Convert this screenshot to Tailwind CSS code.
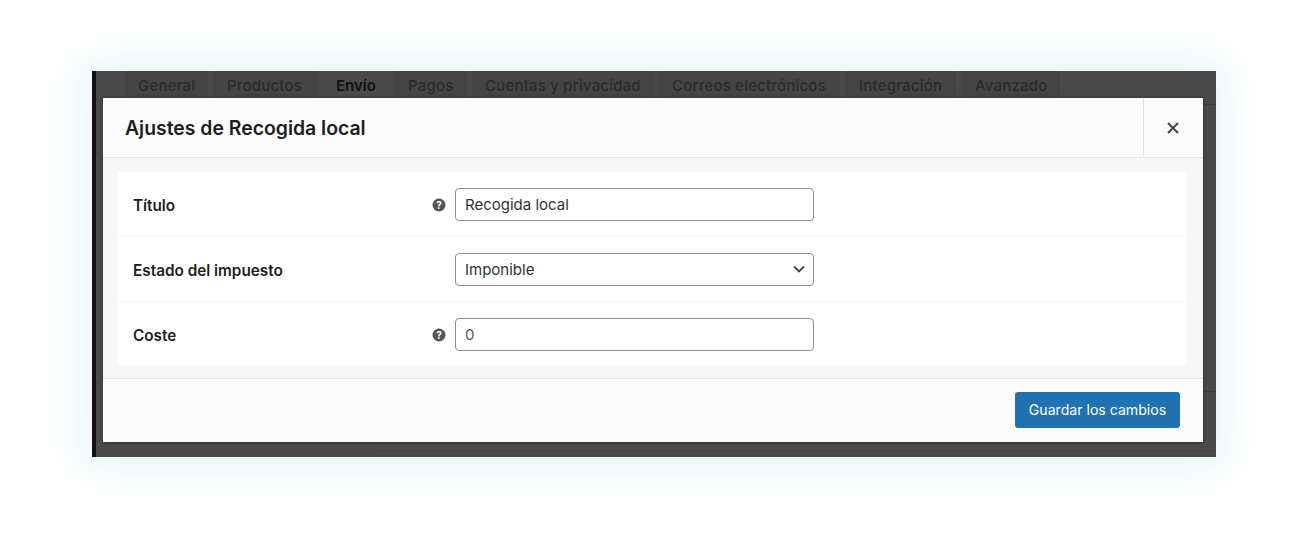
<!DOCTYPE html>
<html lang="es">
<head>
    <meta charset="UTF-8">
    <title>Ajustes de Recogida local</title>
    <script src="https://cdn.jsdelivr.net/npm/@tailwindcss/browser@4"></script>
</head>
<body class="bg-white h-[542px] overflow-hidden font-['Inter',sans-serif]">
    <div class="pt-[71px] pl-[92px]">
        <!-- fondo oscuro de WooCommerce -->
        <div class="relative w-[1124px] h-[386px] bg-[#4a4a4a] border-l-4 border-[#111] shadow-[0_0_36px_10px_#e6f5f9]">
            <!-- lineas de la pagina que quedan detras del modal -->
            <div class="absolute left-[1107px] right-0 top-[33px] h-px bg-[#3f3f3f]"></div>
            <div class="absolute left-[1107px] right-0 top-[320px] h-px bg-[#3f3f3f]"></div>
            <div class="absolute left-[280px] right-0 bottom-[6px] h-px bg-[#444]"></div>

            <div class="flex h-[27px] pl-[29px] gap-[6px] text-[15px] tracking-[0.2px] font-medium text-[#2b2b2b] leading-[29px]">
                <div class="w-[83px] bg-[#444] pl-[13px]">General</div>
                <div class="w-[103px] bg-[#444] pl-[13px]">Productos</div>
                <div class="w-[66px] bg-[#4a4a4a] pl-[13px] font-semibold tracking-normal text-[#111]">Envío</div>
                <div class="w-[71px] bg-[#444] pl-[13px]">Pagos</div>
                <div class="w-[181px] bg-[#444] pl-[13px]">Cuentas y privacidad</div>
                <div class="w-[181px] bg-[#444] pl-[13px]">Correos electrónicos</div>
                <div class="w-[110px] bg-[#444] pl-[13px]">Integración</div>
                <div class="w-[98px] bg-[#444] pl-[13px]">Avanzado</div>
            </div>
            <!-- modal -->
            <div class="relative ml-[7px] w-[1100px] h-[344px] bg-white flex flex-col shadow-[0_0_3px_#2a2a2a]">
                <div class="h-[60px] flex items-center justify-between bg-[#fcfcfc] border-b border-[#e2e2e2]">
                    <h1 class="pl-[22px] pt-[2px] text-[19.4px] font-semibold text-[#1d1d1d]">Ajustes de Recogida local</h1>
                    <div class="w-[60px] h-full border-l border-[#e2e2e2] flex items-center justify-center pr-[2px]">
                        <svg width="14" height="14" viewBox="0 0 14 14" fill="none" stroke="#3c434a" stroke-width="2"><path d="M2 2l10 10M12 2L2 12"/></svg>
                    </div>
                </div>
                <div class="h-[220px] bg-[#f7f7f7] px-[15px] pt-[14px]">
                    <div class="w-[1069px] h-[193px] bg-white text-[15.3px] font-semibold text-[#1d1d1d]">
                        <div class="h-[65px] flex items-center border-b border-[#f8f8f8] pl-[15px]">
                            <span class="w-[299px] mt-[4px]">Título</span>
                            <span class="w-[23px] flex mt-[2px]"><svg width="14" height="14" viewBox="0 0 14 14"><circle cx="7" cy="7" r="6.5" fill="#555"/><text x="7" y="10.5" text-anchor="middle" font-size="10" font-weight="700" fill="#fff" font-family="Inter">?</text></svg></span>
                            <div class="w-[359px] h-[33px] border border-[#8c8f94] rounded-[4px] pl-[9px] pt-[2px] flex items-center text-[15px] font-normal text-[#2c3338]">Recogida local</div>
                        </div>
                        <div class="h-[65px] flex items-center border-b border-[#f8f8f8] pl-[15px]">
                            <span class="w-[322px] mt-[4px]">Estado del impuesto</span>
                            <div class="w-[359px] h-[33px] border border-[#8c8f94] rounded-[4px] pl-[9px] pr-[8px] pt-[2px] flex items-center justify-between text-[15px] font-normal text-[#2c3338]">
                                Imponible
                                <svg class="-mt-[2px]" width="12" height="8" viewBox="0 0 12 8" fill="none" stroke="#3c434a" stroke-width="1.8"><path d="M1 1.5l5 5 5-5"/></svg>
                            </div>
                        </div>
                        <div class="h-[63px] flex items-center pl-[15px] pt-[2px]">
                            <span class="w-[299px] mt-[4px]">Coste</span>
                            <span class="w-[23px] flex"><svg width="14" height="14" viewBox="0 0 14 14"><circle cx="7" cy="7" r="6.5" fill="#555"/><text x="7" y="10.5" text-anchor="middle" font-size="10" font-weight="700" fill="#fff" font-family="Inter">?</text></svg></span>
                            <div class="w-[359px] h-[33px] border border-[#8c8f94] rounded-[4px] pl-[9px] pt-[2px] flex items-center text-[15px] font-normal text-[#50575e]">0</div>
                        </div>
                    </div>
                </div>
                <div class="h-[64px] bg-[#fcfcfc] border-t border-[#e2e2e2] flex items-center justify-end pr-[23px] pb-[2px]">
                    <button class="w-[165px] h-[36px] bg-[#2271b1] rounded-[3px] text-white text-[14.1px] font-normal">Guardar los cambios</button>
                </div>
            </div>
        </div>
    </div>
</body>
</html>
